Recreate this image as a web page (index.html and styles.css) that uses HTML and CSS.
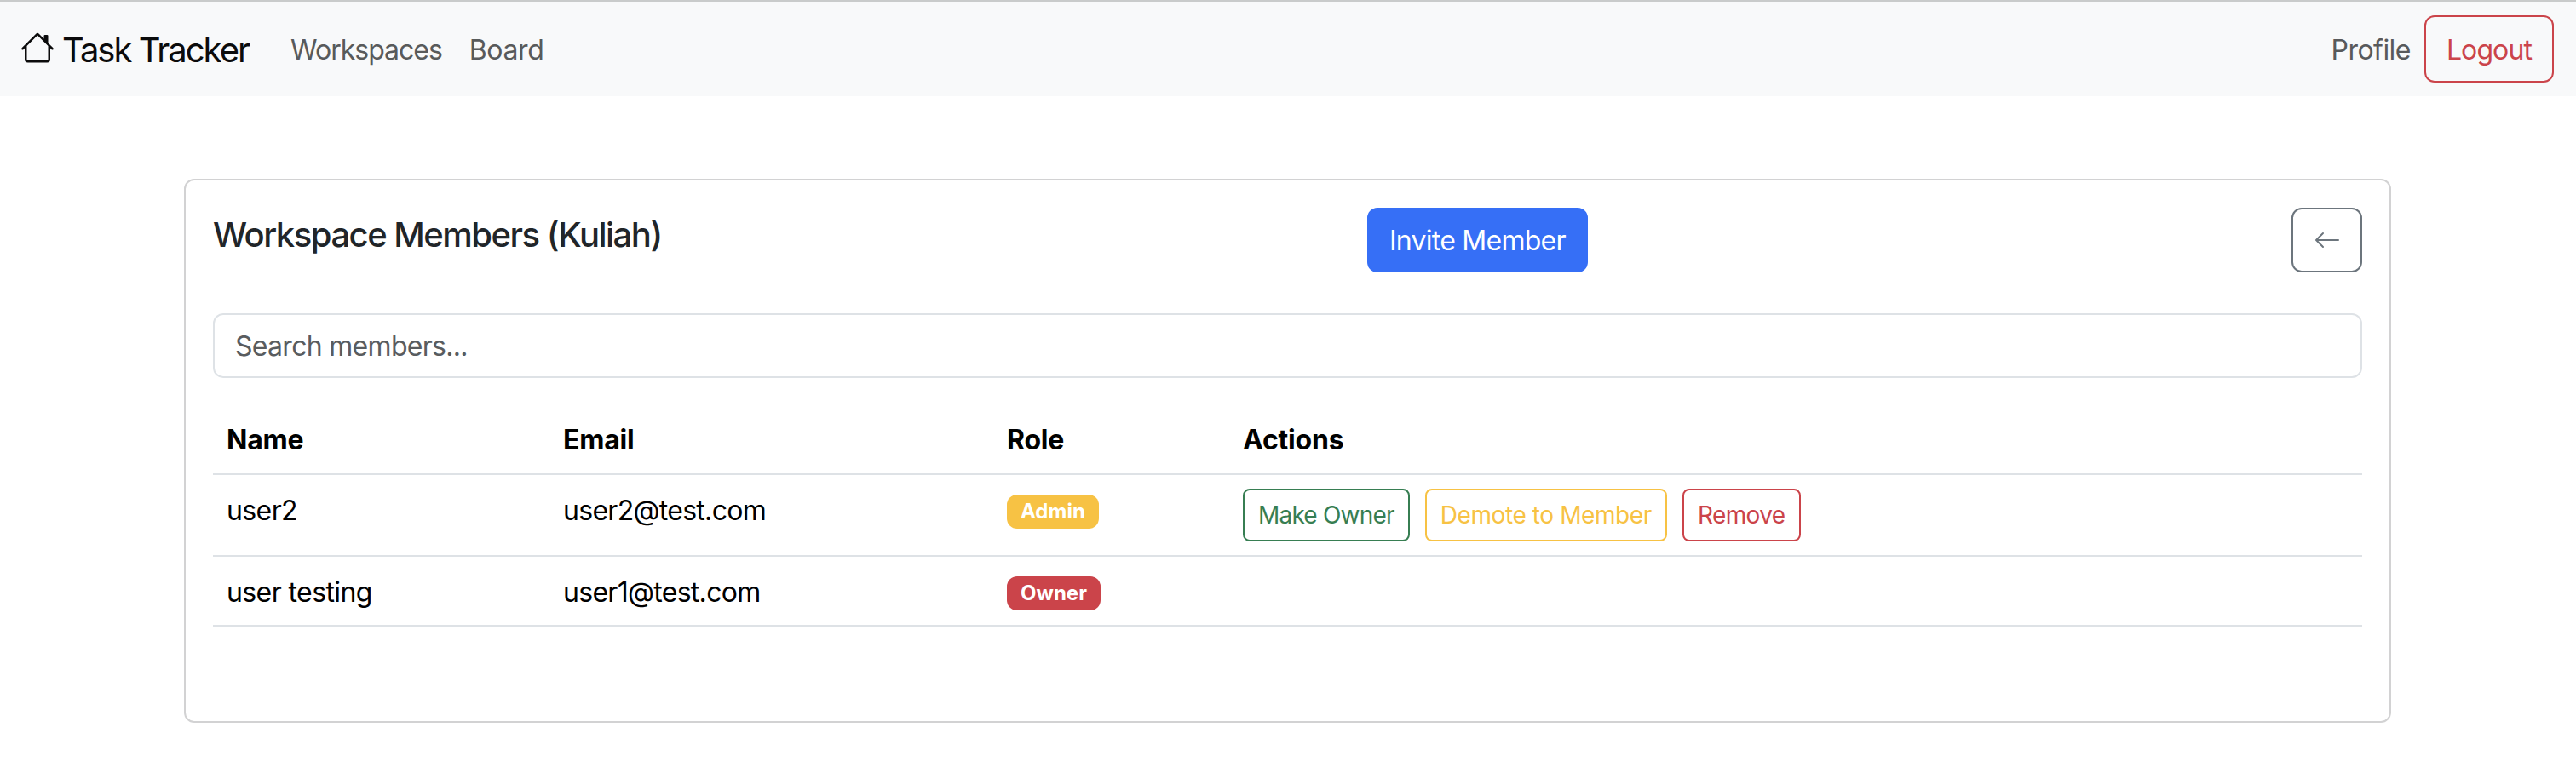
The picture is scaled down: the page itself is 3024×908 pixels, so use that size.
FILE: index.html
```html
<!DOCTYPE html>
<html lang="en">
<head>
<meta charset="utf-8">
<title>Task Tracker</title>
<link rel="stylesheet" href="styles.css">
</head>
<body>
<nav class="navbar">
  <a class="brand" href="#">
    <svg class="brand-icon" viewBox="0 0 16 16" fill="currentColor" aria-hidden="true"><path d="M8.707 1.5a1 1 0 0 0-1.414 0L.646 8.146a.5.5 0 0 0 .708.708L2 8.207V13.5A1.5 1.5 0 0 0 3.5 15h9a1.5 1.5 0 0 0 1.5-1.5V8.207l.646.647a.5.5 0 0 0 .708-.708L13 5.793V2.5a.5.5 0 0 0-.5-.5h-1a.5.5 0 0 0-.5.5v1.293zM13 7.207V13.5a.5.5 0 0 1-.5.5h-9a.5.5 0 0 1-.5-.5V7.207l5-5z"/></svg>
    <span class="brand-text">Task Tracker</span>
  </a>
  <div class="nav-links">
    <a class="nav-link link-workspaces" href="#">Workspaces</a>
    <a class="nav-link link-board" href="#">Board</a>
  </div>
  <div class="nav-right">
    <a class="nav-link link-profile" href="#">Profile</a>
    <button class="btn btn-logout">Logout</button>
  </div>
</nav>
<main class="main">
  <section class="card">
    <header class="card-head">
      <h5 class="card-title">Workspace Members (Kuliah)</h5>
      <button class="btn btn-primary">Invite Member</button>
      <button class="btn btn-back" aria-label="Back">
        <svg class="back-icon" viewBox="0 0 16 16" fill="currentColor" aria-hidden="true"><path fill-rule="evenodd" d="M15 8a.5.5 0 0 0-.5-.5H2.707l3.147-3.146a.5.5 0 1 0-.708-.708l-4 4a.5.5 0 0 0 0 .708l4 4a.5.5 0 0 0 .708-.708L2.707 8.5H14.5A.5.5 0 0 0 15 8"/></svg>
      </button>
    </header>
    <input class="search" type="text" placeholder="Search members...">
    <table class="table">
      <thead>
        <tr>
          <th class="col-name">Name</th>
          <th class="col-email">Email</th>
          <th class="col-role">Role</th>
          <th>Actions</th>
        </tr>
      </thead>
      <tbody>
        <tr>
          <td class="cell-text">user2</td>
          <td class="cell-text cell-email">user2@test.com</td>
          <td><span class="badge badge-admin">Admin</span></td>
          <td>
            <div class="actions">
              <button class="btn-sm btn-success">Make Owner</button>
              <button class="btn-sm btn-warning">Demote to Member</button>
              <button class="btn-sm btn-danger">Remove</button>
            </div>
          </td>
        </tr>
        <tr>
          <td class="cell-text">user testing</td>
          <td class="cell-text cell-email">user1@test.com</td>
          <td><span class="badge badge-owner">Owner</span></td>
          <td></td>
        </tr>
      </tbody>
    </table>
  </section>
</main>
</body>
</html>
```
FILE: styles.css
```css
* { box-sizing: border-box; }
html, body { margin: 0; padding: 0; }
body {
  font-family: Inter, "Liberation Sans", sans-serif;
  font-size: 32px;
  line-height: 48px;
  color: #000;
  background: #fff;
}
a { text-decoration: none; }
button { font-family: inherit; cursor: pointer; background: none; }

.navbar {
  display: flex;
  align-items: center;
  height: 113px;
  padding: 16px 26px 16px 24px;
  background: #f8f9fa;
  border-top: 2px solid #c9cbcb;
}
.brand {
  display: flex;
  align-items: center;
  gap: 9px;
  font-size: 40px;
  letter-spacing: -2px;
  color: #0b0b0b;
}
.brand-text { padding-top: 2px; }
.brand-icon { width: 40px; height: 40px; margin-top: -4px; }
.nav-links { display: flex; margin-left: 33px; }
.nav-link { padding: 2px 16px 0; color: #585a5b; }
.link-workspaces { letter-spacing: -1px; }
.link-board { letter-spacing: -0.4px; }
.link-profile { letter-spacing: -0.55px; }
.nav-right { display: flex; align-items: center; margin-left: auto; }
.nav-right .nav-link { padding: 2px 16px 0 0; }

.btn {
  display: inline-flex;
  align-items: center;
  justify-content: center;
  height: 76px;
  padding: 0 24px;
  font-size: 32px;
  line-height: 48px;
  border: 2px solid transparent;
  border-radius: 12px;
}
.btn-logout { height: 79px; padding-top: 2px; color: #cb444a; border-color: #cb444a; letter-spacing: -0.9px; }
.btn-primary { padding-top: 2px; background: #366ff6; color: #fff; border-color: #366ff6; letter-spacing: -0.75px; }
.btn-back { width: 83px; padding: 0; color: #6c757d; border-color: #6c757d; }
.back-icon { width: 32px; height: 32px; }

.main { padding: 97px 217px 59px 216px; }
.card {
  height: 639px;
  padding: 32px;
  border: 2px solid #d2d2d3;
  border-radius: 12px;
}
.card-head {
  display: grid;
  grid-template-columns: 1355px auto 1fr;
  align-items: start;
  margin-bottom: 48px;
}
.card-title {
  margin: 8px 0 0;
  font-size: 40px;
  font-weight: 500;
  line-height: 48px;
  letter-spacing: -1.5px;
  color: #212529;
}
.btn-back { justify-self: end; }

.search {
  display: block;
  width: 100%;
  height: 76px;
  margin-bottom: 32px;
  padding: 0 24px;
  font-family: inherit;
  font-size: 32px;
  letter-spacing: -0.7px;
  color: #212529;
  background: #fff;
  border: 2px solid #dee2e6;
  border-radius: 12px;
}
.search::placeholder { color: #595c5f; opacity: 1; }

.table {
  width: 100%;
  table-layout: fixed;
  border-collapse: collapse;
}
.table th, .table td {
  padding: 16px;
  text-align: left;
  vertical-align: top;
  border-bottom: 2px solid #dee2e6;
  letter-spacing: -0.6px;
}
.table th { padding: 17px 16px 15px; font-weight: 700; letter-spacing: -0.2px; }
.table .cell-text { padding: 18px 16px 14px; }
.table .cell-email { letter-spacing: -0.7px; }
.col-name { width: 395px; }
.col-email { width: 521px; }
.col-role { width: 277px; }

.table .badge {
  display: inline-block;
  padding: 8px 16px;
  font-size: 24px;
  font-weight: 700;
  line-height: 24px;
  letter-spacing: 0;
  color: #fff;
  border-radius: 12px;
}
.badge-admin { background: #f7c244; }
.badge-owner { background: #cb444a; }

.actions { display: flex; gap: 18px; }
.btn-sm {
  height: 62px;
  padding: 0 16px;
  font-size: 28px;
  line-height: 42px;
  border: 2px solid;
  border-radius: 8px;
}
.btn-success { color: #377e52; border-color: #377e52; letter-spacing: -0.8px; }
.btn-warning { color: #f7c244; border-color: #f7c244; letter-spacing: -0.4px; }
.btn-danger { color: #cb444a; border-color: #cb444a; letter-spacing: -0.6px; }
```
